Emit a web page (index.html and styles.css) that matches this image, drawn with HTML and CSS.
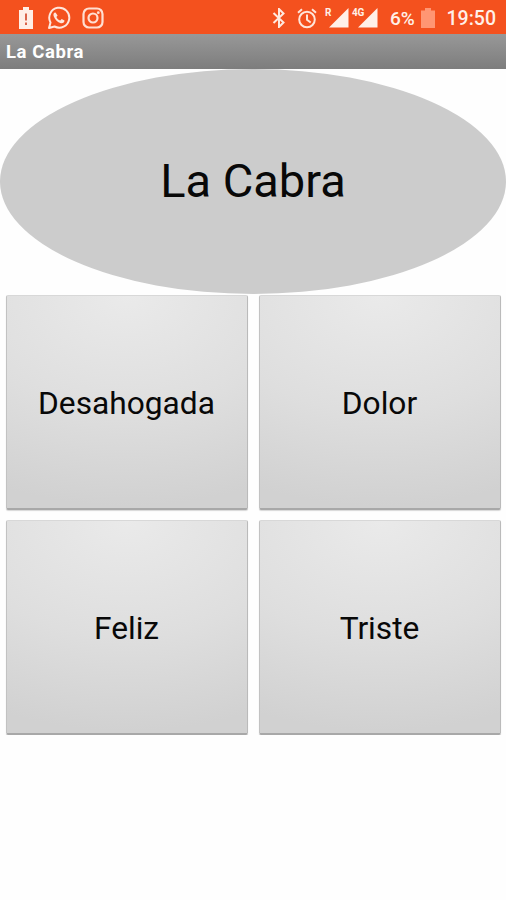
FILE: index.html
```html
<!DOCTYPE html>
<html lang="es">
<head>
<meta charset="utf-8">
<title>La Cabra</title>
<link rel="stylesheet" href="styles.css">
</head>
<body>
<header class="status">
  <svg class="battery-alert" width="16" height="22" viewBox="0 0 16 22"><path d="M1 3h4V0h6v3h4v19H1z" fill="#ffeee6"/><path d="M8 6.500v7M8 15.500v2.500" stroke="#d9644a" stroke-width="2"/></svg>
  <svg class="whatsapp" width="24" height="24" viewBox="0 0 24 24"><path d="M2 22l1.500-5.500A10 10 0 1 1 7.500 20.500z" fill="none" stroke="#ffe6dc" stroke-width="2" stroke-linejoin="round"/><path d="M8.500 6.500c-2 0-2.500 2-1.700 4 1.300 3.300 3.700 5.700 7 6.700 2 .5 3.800-.8 3.700-2.700l-2.800-1.500-1.500 1.600c-1.800-.7-3-1.900-3.800-3.600l1.200-1.500z" fill="#ffe6dc"/></svg>
  <svg class="instagram" width="22" height="22" viewBox="0 0 22 22"><g fill="none" stroke="#ffdfd2" stroke-width="2.200"><rect x="1.500" y="1.500" width="19" height="19" rx="5.500"/><circle cx="11" cy="11" r="4.500"/></g><circle cx="16.300" cy="5.700" r="1.400" fill="#ffdfd2"/></svg>
  <svg class="bluetooth" width="14" height="20" viewBox="0 0 14 20"><path d="M1.500 5l10 9.500L7 19V1l4.500 4.500-10 9.500" fill="none" stroke="#ffe9df" stroke-width="2"/></svg>
  <svg class="alarm" width="20" height="21" viewBox="0 0 20 21"><g fill="none" stroke="#ffe5d9" stroke-width="2"><circle cx="10" cy="11.500" r="7.800"/><path d="M10 6.500v5.300l3.700 2.700M1 4.700L5 1.300M19 4.700L15 1.300"/></g></svg>
  <span class="net net-r">R</span>
  <svg class="signal" width="20" height="20" viewBox="0 0 20 20"><path d="M0 19.500L19.500 0v19.500z" fill="#fff0e8"/></svg>
  <span class="net net-4g">4G</span>
  <svg class="signal" width="20" height="20" viewBox="0 0 20 20"><path d="M0 19.500L19.500 0v19.500z" fill="#fff0e8"/></svg>
  <span class="percent">6%</span>
  <svg class="battery" width="14" height="20" viewBox="0 0 14 20"><path d="M0 2.500h4V0h6v2.500h4V20H0z" fill="#ff9673"/></svg>
  <span class="clock">19:50</span>
</header>
<h1 class="titlebar">La Cabra</h1>
<main>
  <div class="oval">La Cabra</div>
  <div class="grid">
    <button>Desahogada</button>
    <button>Dolor</button>
    <button>Feliz</button>
    <button>Triste</button>
  </div>
</main>
</body>
</html>
```

FILE: styles.css
```css
* { box-sizing: border-box; }

body {
  margin: 0;
  background: #fefefe;
  font-family: Roboto, sans-serif;
  color: #080808;
}

.status {
  display: flex;
  align-items: center;
  height: 34px;
  padding: 2px 10px 0 18px;
  background: #f4511e;
  color: #fff0e8;
}

.status svg { flex: none; }
.whatsapp { margin-left: 13px; }
.instagram { margin-left: 11px; }
.bluetooth { margin-left: 168px; }
.alarm { margin-left: 11px; }

.net {
  align-self: flex-start;
  margin-top: 5px;
  font-size: 10px;
  line-height: 12px;
  font-weight: 700;
  letter-spacing: -0.3px;
}

.net-r { width: 4px; margin-left: 8px; }
.net-4g { width: 6px; margin-left: 3px; }

.percent {
  width: 26px;
  margin-left: 12px;
  font-size: 19px;
  font-weight: 500;
}

.battery { margin-left: 5px; }

.clock {
  margin-left: auto;
  font-size: 19.500px;
  font-weight: 500;
}

.titlebar {
  height: 35px;
  margin: 0;
  padding-left: 6px;
  background: linear-gradient(#989898, #7d7d7d);
  color: #fff;
  font-size: 18.500px;
  line-height: 36px;
  font-weight: 700;
  letter-spacing: 0.6px;
}

.oval {
  display: grid;
  place-items: center;
  height: 225px;
  padding-bottom: 2px;
  border-radius: 50%;
  background: #ccc;
  font-size: 47px;
}

.grid {
  display: grid;
  grid-template-columns: 242px 242px;
  grid-auto-rows: 215px;
  gap: 10px 11px;
  padding: 1px 0 0 6px;
}

button {
  padding: 3px 1px 0 0;
  border: solid #bcbcbc;
  border-width: 1px 1px 2px;
  border-color: #d8d8d8 #bababa #a8a8a8 #c2c2c2;
  border-radius: 2px;
  background: radial-gradient(ellipse 140% 110% at 50% 0, #eaeaea, #dedede 50%, #d1d1d1 90%);
  box-shadow: 0 1px 1px #d8d8d8;
  color: inherit;
  font: 31.700px Roboto, sans-serif;
}
```
